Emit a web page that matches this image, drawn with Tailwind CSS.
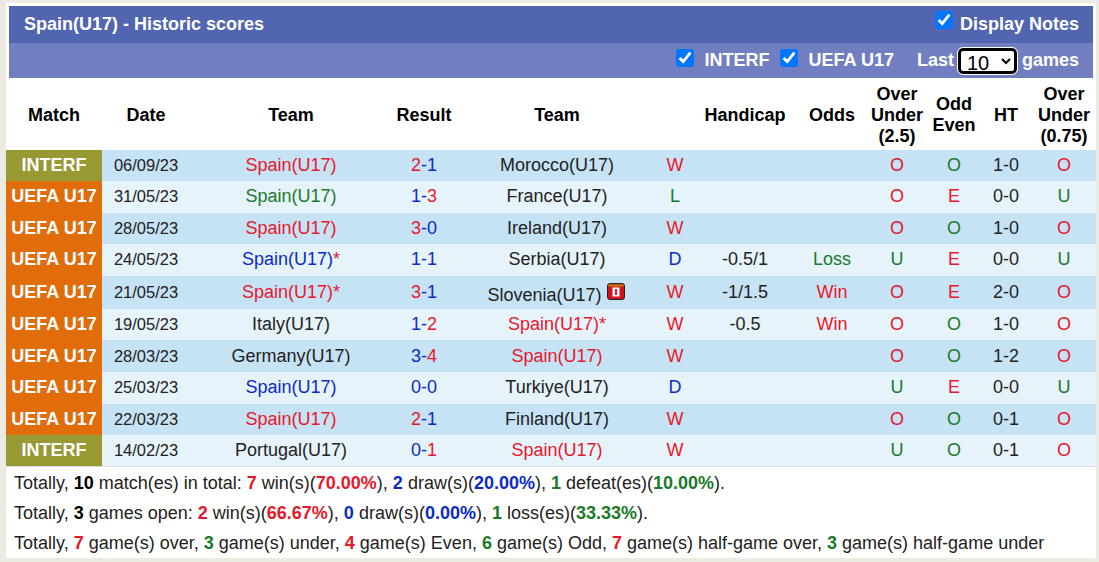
<!DOCTYPE html>
<html lang="en">
<head>
  <meta charset="UTF-8" />
  <title>Spain(U17) - Historic scores</title>
  <script src="https://cdn.jsdelivr.net/npm/@tailwindcss/browser@4"></script>
</head>
<body class="bg-[#ebebe4] font-['Liberation_Sans',Arial,sans-serif] text-[18px] text-[#222]">
  <div class="mx-[6px] mt-[3px] w-[1090px] h-[555px] bg-white overflow-hidden">
    <!-- Title bars -->
    <div class="mx-[3px] mt-[3px] bg-[#5265b0] h-[37px] flex items-center justify-between pl-[15px] pr-[14px] text-white font-bold">
      <span>Spain(U17) - Historic scores</span>
      <label class="flex items-center gap-[7px]"><input type="checkbox" checked class="w-[18px] h-[18px] -mt-[10px]" />Display Notes</label>
    </div>
    <div class="mx-[3px] bg-[#717fc0] h-[35px] flex items-center justify-end pr-[14px] text-white font-bold">
      <input type="checkbox" checked class="w-[18px] h-[18px] -mt-[6px]" />
      <span class="ml-[11px]">INTERF</span>
      <input type="checkbox" checked class="w-[18px] h-[18px] -mt-[6px] ml-[10px]" />
      <span class="ml-[11px]">UEFA U17</span>
      <span class="ml-[23px]">Last</span>
      <select class="ml-[4px] mr-[5px] w-[59px] h-[26px] pl-[2px] border-[3px] border-black rounded-[5px] bg-white text-black font-normal text-[20px] outline outline-white"><option>10</option></select>
      <span>games</span>
    </div>

    <!-- Score table -->
    <table class="w-[1090px] table-fixed border-collapse text-center">
      <colgroup>
        <col class="w-[96px]" /><col class="w-[88px]" /><col class="w-[202px]" /><col class="w-[64px]" /><col class="w-[202px]" /><col class="w-[34px]" />
        <col class="w-[106px]" /><col class="w-[68px]" /><col class="w-[62px]" /><col class="w-[52px]" /><col class="w-[52px]" /><col class="w-[64px]" />
      </colgroup>
      <thead class="font-bold text-black leading-[31px]">
        <tr class="h-[72px] [&>th]:pt-[2px]">
          <th>Match</th><th>Date</th><th>Team</th><th>Result</th><th>Team</th><th></th><th>Handicap</th><th>Odds</th>
          <th class="leading-[21px]">Over<br />Under<br />(2.5)</th>
          <th class="leading-[21px]">Odd<br />Even</th>
          <th>HT</th>
          <th class="leading-[21px]">Over<br />Under<br />(0.75)</th>
        </tr>
      </thead>
      <tbody>
        <tr class="h-[31px] bg-[#c6e2f5]">
          <td class="bg-[#999933] text-white font-bold">INTERF</td><td class="text-[16.5px]">06/09/23</td><td class="text-[#e8182a]">Spain(U17)</td>
          <td class="text-[#0a2bc8]"><span class="text-[#e8182a]">2</span>-1</td><td>Morocco(U17)</td><td class="text-[#e8182a]">W</td><td></td><td></td>
          <td class="text-[#e8182a]">O</td><td class="text-[#1a7a2a]">O</td><td>1-0</td><td class="text-[#e8182a]">O</td>
        </tr>
        <tr class="h-[32px] bg-[#e6f3fb] [&>td]:pb-[2px]">
          <td class="bg-[#e06c0a] text-white font-bold">UEFA U17</td><td class="text-[16.5px]">31/05/23</td><td class="text-[#1a7a2a]">Spain(U17)</td>
          <td class="text-[#0a2bc8]">1-<span class="text-[#e8182a]">3</span></td><td>France(U17)</td><td class="text-[#1a7a2a]">L</td><td></td><td></td>
          <td class="text-[#e8182a]">O</td><td class="text-[#e8182a]">E</td><td>0-0</td><td class="text-[#1a7a2a]">U</td>
        </tr>
        <tr class="h-[31px] bg-[#c6e2f5]">
          <td class="bg-[#e06c0a] text-white font-bold">UEFA U17</td><td class="text-[16.5px]">28/05/23</td><td class="text-[#e8182a]">Spain(U17)</td>
          <td class="text-[#0a2bc8]"><span class="text-[#e8182a]">3</span>-0</td><td>Ireland(U17)</td><td class="text-[#e8182a]">W</td><td></td><td></td>
          <td class="text-[#e8182a]">O</td><td class="text-[#1a7a2a]">O</td><td>1-0</td><td class="text-[#e8182a]">O</td>
        </tr>
        <tr class="h-[32px] bg-[#e6f3fb] [&>td]:pb-[2px]">
          <td class="bg-[#e06c0a] text-white font-bold">UEFA U17</td><td class="text-[16.5px]">24/05/23</td><td class="text-[#0a2bc8]">Spain(U17)<span class="text-[#e8182a]">*</span></td>
          <td class="text-[#0a2bc8]">1-1</td><td>Serbia(U17)</td><td class="text-[#0a2bc8]">D</td><td>-0.5/1</td><td class="text-[#1a7a2a]">Loss</td>
          <td class="text-[#1a7a2a]">U</td><td class="text-[#e8182a]">E</td><td>0-0</td><td class="text-[#1a7a2a]">U</td>
        </tr>
        <tr class="h-[33px] bg-[#c6e2f5]">
          <td class="bg-[#e06c0a] text-white font-bold">UEFA U17</td><td class="text-[16.5px]">21/05/23</td><td class="text-[#e8182a]">Spain(U17)*</td>
          <td class="text-[#0a2bc8]"><span class="text-[#e8182a]">3</span>-1</td>
          <td class="pt-[5px] pr-[2px]">Slovenia(U17) <svg class="inline-block align-[1px]" width="18" height="17" viewBox="0 0 18 17"><rect x="0.5" y="0.5" width="17" height="16" rx="2.5" fill="#d6101c" stroke="#222" /><rect x="1.5" y="1.5" width="15" height="2" fill="#b8860b" /><rect x="5.5" y="4.5" width="7" height="9" fill="#fff" /><rect x="8" y="6" width="2" height="6" fill="#e8182a" /></svg></td>
          <td class="text-[#e8182a]">W</td><td>-1/1.5</td><td class="text-[#e8182a]">Win</td>
          <td class="text-[#e8182a]">O</td><td class="text-[#e8182a]">E</td><td>2-0</td><td class="text-[#e8182a]">O</td>
        </tr>
        <tr class="h-[31px] bg-[#e6f3fb]">
          <td class="bg-[#e06c0a] text-white font-bold">UEFA U17</td><td class="text-[16.5px]">19/05/23</td><td>Italy(U17)</td>
          <td class="text-[#0a2bc8]">1-<span class="text-[#e8182a]">2</span></td><td class="text-[#e8182a]">Spain(U17)*</td><td class="text-[#e8182a]">W</td><td>-0.5</td><td class="text-[#e8182a]">Win</td>
          <td class="text-[#e8182a]">O</td><td class="text-[#1a7a2a]">O</td><td>1-0</td><td class="text-[#e8182a]">O</td>
        </tr>
        <tr class="h-[32px] bg-[#c6e2f5]">
          <td class="bg-[#e06c0a] text-white font-bold">UEFA U17</td><td class="text-[16.5px]">28/03/23</td><td>Germany(U17)</td>
          <td class="text-[#0a2bc8]">3-<span class="text-[#e8182a]">4</span></td><td class="text-[#e8182a]">Spain(U17)</td><td class="text-[#e8182a]">W</td><td></td><td></td>
          <td class="text-[#e8182a]">O</td><td class="text-[#1a7a2a]">O</td><td>1-2</td><td class="text-[#e8182a]">O</td>
        </tr>
        <tr class="h-[32px] bg-[#e6f3fb] [&>td]:pb-[2px]">
          <td class="bg-[#e06c0a] text-white font-bold">UEFA U17</td><td class="text-[16.5px]">25/03/23</td><td class="text-[#0a2bc8]">Spain(U17)</td>
          <td class="text-[#0a2bc8]">0-0</td><td>Turkiye(U17)</td><td class="text-[#0a2bc8]">D</td><td></td><td></td>
          <td class="text-[#1a7a2a]">U</td><td class="text-[#e8182a]">E</td><td>0-0</td><td class="text-[#1a7a2a]">U</td>
        </tr>
        <tr class="h-[31px] bg-[#c6e2f5]">
          <td class="bg-[#e06c0a] text-white font-bold">UEFA U17</td><td class="text-[16.5px]">22/03/23</td><td class="text-[#e8182a]">Spain(U17)</td>
          <td class="text-[#0a2bc8]"><span class="text-[#e8182a]">2</span>-1</td><td>Finland(U17)</td><td class="text-[#e8182a]">W</td><td></td><td></td>
          <td class="text-[#e8182a]">O</td><td class="text-[#1a7a2a]">O</td><td>0-1</td><td class="text-[#e8182a]">O</td>
        </tr>
        <tr class="h-[31px] bg-[#e6f3fb]">
          <td class="bg-[#999933] text-white font-bold">INTERF</td><td class="text-[16.5px]">14/02/23</td><td>Portugal(U17)</td>
          <td class="text-[#0a2bc8]">0-<span class="text-[#e8182a]">1</span></td><td class="text-[#e8182a]">Spain(U17)</td><td class="text-[#e8182a]">W</td><td></td><td></td>
          <td class="text-[#1a7a2a]">U</td><td class="text-[#1a7a2a]">O</td><td>0-1</td><td class="text-[#e8182a]">O</td>
        </tr>
      </tbody>
    </table>

    <!-- Summary -->
    <div class="border-t border-[#ddd] pl-[8px] pt-[1px] leading-[30px] whitespace-nowrap">
      <p>Totally, <b class="text-black">10</b> match(es) in total: <b class="text-[#e8182a]">7</b> win(s)(<b class="text-[#e8182a]">70.00%</b>), <b class="text-[#0a2bc8]">2</b> draw(s)(<b class="text-[#0a2bc8]">20.00%</b>), <b class="text-[#1a7a2a]">1</b> defeat(es)(<b class="text-[#1a7a2a]">10.00%</b>).</p>
      <p>Totally, <b class="text-black">3</b> games open: <b class="text-[#e8182a]">2</b> win(s)(<b class="text-[#e8182a]">66.67%</b>), <b class="text-[#0a2bc8]">0</b> draw(s)(<b class="text-[#0a2bc8]">0.00%</b>), <b class="text-[#1a7a2a]">1</b> loss(es)(<b class="text-[#1a7a2a]">33.33%</b>).</p>
      <p>Totally, <b class="text-[#e8182a]">7</b> game(s) over, <b class="text-[#1a7a2a]">3</b> game(s) under, <b class="text-[#e8182a]">4</b> game(s) Even, <b class="text-[#1a7a2a]">6</b> game(s) Odd, <b class="text-[#e8182a]">7</b> game(s) half-game over, <b class="text-[#1a7a2a]">3</b> game(s) half-game under</p>
    </div>
  </div>
</body>
</html>
